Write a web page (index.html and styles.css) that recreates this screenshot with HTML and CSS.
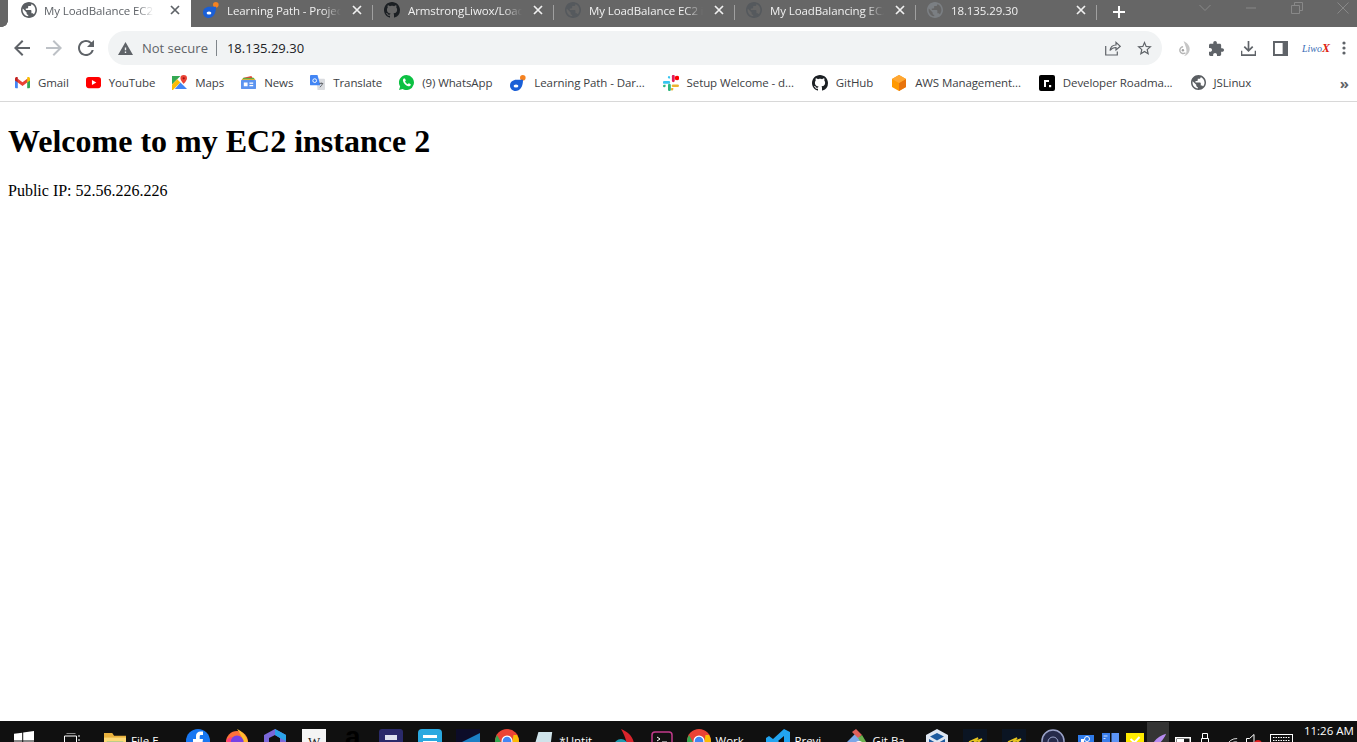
FILE: index.html
```html
<!DOCTYPE html>
<html lang="en">
<head>
<meta charset="utf-8">
<title>My LoadBalance EC2</title>
<link rel="stylesheet" href="styles.css">
</head>
<body>
<svg class="defs" width="0" height="0">
  <symbol id="globe" viewBox="2 2 20 20"><path d="M12 2C6.48 2 2 6.48 2 12s4.48 10 10 10 10-4.48 10-10S17.52 2 12 2zm-1 17.93c-3.95-.49-7-3.85-7-7.93 0-.62.08-1.21.21-1.79L9 15v1c0 1.1.9 2 2 2v1.93zm6.9-2.54c-.26-.81-1-1.39-1.9-1.39h-1v-3c0-.55-.45-1-1-1H8v-2h2c.55 0 1-.45 1-1V7h2c1.1 0 2-.9 2-2v-.41c2.93 1.19 5 4.06 5 7.41 0 2.08-.8 3.97-2.1 5.39z"/></symbol>
  <symbol id="github" viewBox="0 0 16 16"><path d="M8 0C3.58 0 0 3.58 0 8c0 3.54 2.29 6.53 5.47 7.59.4.07.55-.17.55-.38 0-.19-.01-.82-.01-1.49-2.01.37-2.53-.49-2.69-.94-.09-.23-.48-.94-.82-1.13-.28-.15-.68-.52-.01-.53.63-.01 1.08.58 1.23.82.72 1.21 1.87.87 2.33.66.07-.52.28-.87.51-1.07-1.78-.2-3.64-.89-3.64-3.95 0-.87.31-1.59.82-2.15-.08-.2-.36-1.02.08-2.12 0 0 .67-.21 2.2.82.64-.18 1.32-.27 2-.27s1.36.09 2 .27c1.53-1.04 2.2-.82 2.2-.82.44 1.1.16 1.92.08 2.12.51.56.82 1.27.82 2.15 0 3.07-1.87 3.75-3.65 3.95.29.25.54.73.54 1.48 0 1.07-.01 1.93-.01 2.2 0 .21.15.46.55.38A8.01 8.01 0 0 0 16 8c0-4.42-3.58-8-8-8z"/></symbol>
  <symbol id="close" viewBox="0 0 10 10"><path d="M1 1l8 8M9 1l-8 8" stroke="currentColor" stroke-width="1.7" fill="none"/></symbol>
  <symbol id="dar" viewBox="0 0 16 16"><circle cx="12.8" cy="2.800" r="2.800" fill="#f58220"/><path d="M13 4.800C13 12 10 16 5.500 16 2.400 16 0 13.600 0 10.500 0 7 3 4.800 6.500 4.800z" fill="#1a5fd6"/><ellipse cx="6" cy="11" rx="2.400" ry="1.500" fill="#fff"/></symbol>
</svg>

<header class="chrome">
  <div class="tabstrip">
    <div class="tab tab-active">
      <svg class="fav fav-dark"><use href="#globe"/></svg>
      <span class="tab-title">My LoadBalance EC2 instance</span>
      <svg class="tab-x"><use href="#close"/></svg>
    </div>
    <div class="tab">
      <svg class="fav"><use href="#dar"/></svg>
      <span class="tab-title">Learning Path - Projects</span>
      <svg class="tab-x"><use href="#close"/></svg>
    </div>
    <div class="tab">
      <svg class="fav fav-black"><use href="#github"/></svg>
      <span class="tab-title">ArmstrongLiwox/LoadBalancer</span>
      <svg class="tab-x"><use href="#close"/></svg>
    </div>
    <div class="tab">
      <svg class="fav fav-dim"><use href="#globe"/></svg>
      <span class="tab-title">My LoadBalance EC2 instance</span>
      <svg class="tab-x"><use href="#close"/></svg>
    </div>
    <div class="tab">
      <svg class="fav fav-dim"><use href="#globe"/></svg>
      <span class="tab-title">My LoadBalancing EC2 instance</span>
      <svg class="tab-x"><use href="#close"/></svg>
    </div>
    <div class="tab">
      <svg class="fav fav-dim2"><use href="#globe"/></svg>
      <span class="tab-title">18.135.29.30</span>
      <svg class="tab-x"><use href="#close"/></svg>
    </div>
    <svg class="newtab" viewBox="0 0 14 14"><path d="M7 1v12M1 7h12" stroke="#fff" stroke-width="2"/></svg>
    <div class="winctl">
      <svg viewBox="0 0 12 8"><path d="M.5 1L6 6.500 11.500 1" fill="none" stroke="#888"/></svg>
      <svg viewBox="0 0 12 8"><path d="M1 4h10" stroke="#888"/></svg>
      <svg viewBox="0 0 12 12"><path d="M.5 3.500h8v8h-8zM3.500 3.500v-3h8v8h-3" fill="none" stroke="#888"/></svg>
      <svg viewBox="0 0 12 12"><path d="M.5.5l11 11M11.500.5l-11 11" fill="none" stroke="#888"/></svg>
    </div>
  </div>

  <div class="toolbar">
    <svg class="nav" viewBox="0 0 24 24"><path fill="#5f6368" d="M20 11H7.830l5.590-5.590L12 4l-8 8 8 8 1.410-1.410L7.830 13H20v-2z"/></svg>
    <svg class="nav" viewBox="0 0 24 24"><path fill="#bdc1c6" d="M12 4l-1.410 1.410L16.170 11H4v2h12.170l-5.580 5.590L12 20l8-8z"/></svg>
    <svg class="nav" viewBox="0 0 24 24"><path fill="#5f6368" d="M17.650 6.350A7.958 7.958 0 0 0 12 4c-4.420 0-7.990 3.580-7.990 8s3.570 8 7.990 8c3.730 0 6.840-2.550 7.730-6h-2.080A5.990 5.990 0 0 1 12 18c-3.310 0-6-2.690-6-6s2.690-6 6-6c1.660 0 3.140.690 4.220 1.780L13 11h7V4l-2.350 2.350z"/></svg>
    <div class="omnibox">
      <svg class="warn" viewBox="1 2 22 19"><path fill="#5f6368" d="M1 21h22L12 2 1 21zm12-3h-2v-2h2v2zm0-4h-2v-4h2v4z"/></svg>
      <span class="secure">Not secure</span>
      <span class="url">18.135.29.30</span>
      <span class="spacer"></span>
      <svg class="omni-ic share" viewBox="0 0 16 16"><path d="M.7 6v9h11.600v-3.500M5 10.500c.5-3.500 3-5.500 6-5.500V2.300L15.300 6.300 11 10V7.500c-2.500 0-4.500 1-6 3z" fill="none" stroke="#5f6368" stroke-width="1.200"/></svg>
      <svg class="omni-ic star" viewBox="2 2 20 19"><path fill="#5f6368" d="M22 9.240l-7.190-.62L12 2 9.190 8.630 2 9.240l5.460 4.730L5.820 21 12 17.270 18.180 21l-1.630-7.030L22 9.240zM12 15.400l-3.760 2.270 1-4.280-3.320-2.880 4.380-.38L12 6.100l1.710 4.040 4.380.38-3.320 2.880 1 4.280L12 15.400z"/></svg>
    </div>
    <div class="ext-row">
      <svg class="ext" viewBox="0 0 16 16"><path d="M7 0c4.500 2.500 7 5.500 6.500 9.500C13 13 10.500 15.500 7.500 16c2-1.500 3-4 2.500-7C9.500 6 8 3 7 0z" fill="#c6c6c6"/><path d="M9 12.500A3.600 3.600 0 1 1 6.500 6.200" fill="none" stroke="#b4b4b4" stroke-width="1.500"/><circle cx="6.300" cy="9.800" r="1.300" fill="#a0a0a0"/></svg>
      <svg class="ext" viewBox="2 1 21 21"><path fill="#5f6368" d="M20.500 11H19V7c0-1.100-.9-2-2-2h-4V3.500C13 2.120 11.880 1 10.500 1S8 2.120 8 3.500V5H4c-1.100 0-1.990.9-1.990 2v3.800H3.500c1.490 0 2.700 1.210 2.700 2.700s-1.210 2.700-2.700 2.700H2V20c0 1.100.9 2 2 2h3.800v-1.500c0-1.490 1.210-2.700 2.700-2.700 1.490 0 2.700 1.210 2.700 2.700V22H17c1.100 0 2-.9 2-2v-4h1.500c1.380 0 2.500-1.120 2.500-2.500S21.880 11 20.500 11z"/></svg>
      <svg class="ext" viewBox="0 0 16 16"><path d="M8 0v10M3.500 6L8 10.500 12.500 6M.5 10.500V15h15v-4.500" fill="none" stroke="#5f6368" stroke-width="1.800"/></svg>
      <svg class="ext" viewBox="0 0 14 14"><path fill="#5f6368" fill-rule="evenodd" d="M0 0h14v14H0zM1.800 1.800v10.400H9V1.800z"/></svg>
      <span class="liwox">Liwo<b>X</b></span>
      <svg class="ext dots" viewBox="0 0 4 14"><circle cx="2" cy="2" r="1.600" fill="#5f6368"/><circle cx="2" cy="7" r="1.600" fill="#5f6368"/><circle cx="2" cy="12" r="1.600" fill="#5f6368"/></svg>
    </div>
  </div>

  <nav class="bookmarks">
    <a class="bm"><svg class="bi" viewBox="0 0 16 12"><path fill="#4285f4" d="M0 2h3v10H1a1 1 0 0 1-1-1z"/><path fill="#34a853" d="M13 2h3v9a1 1 0 0 1-1 1h-2z"/><path fill="#ea4335" d="M3 2v4l5 3.700L13 6V2L8 5.700z"/><path fill="#c5221f" d="M0 2c0-1.500 1.700-2.300 3-1.300V6L0 3.800z"/><path fill="#fbbc04" d="M13 .7C14.300-.3 16 .5 16 2v1.800L13 6z"/></svg>Gmail</a>
    <a class="bm"><svg class="bi" viewBox="0 0 16 12"><rect width="16" height="12" rx="3" fill="#f00"/><path d="M6.300 3.300L11 6l-4.700 2.700z" fill="#fff"/></svg>YouTube</a>
    <a class="bm"><svg class="bi" viewBox="0 0 16 16"><path fill="#34a853" d="M0 1h9L0 10z"/><path fill="#fbbc04" d="M0 10L5.500 4.500 9 8 1 16H0z"/><path fill="#4285f4" d="M9 8l7 7H3z"/><path fill="#ea4335" d="M12.500 0A3.500 3.500 0 0 0 9 3.500c0 2.500 3.500 6 3.500 6S16 6 16 3.500A3.500 3.500 0 0 0 12.500 0z"/><circle cx="12.500" cy="3.500" r="1.200" fill="#a50e0e"/></svg>Maps</a>
    <a class="bm"><svg class="bi" viewBox="0 0 16 14"><path fill="#ea4335" d="M3 2l8-2 2 3H3z"/><path fill="#34a853" d="M2 2h12v3H2z"/><path fill="#fbbc04" d="M1 3h14v2H1z"/><rect y="4" width="16" height="10" rx="1" fill="#5c94f0"/><rect x="3" y="7" width="4" height="4" fill="#fff"/><rect x="9" y="7" width="4" height="1.400" fill="#fff"/><rect x="9" y="9.600" width="4" height="1.400" fill="#fff"/></svg>News</a>
    <a class="bm"><svg class="bi" viewBox="0 0 16 16"><path fill="#dadce0" d="M7 4h8a1 1 0 0 1 1 1v10a1 1 0 0 1-1 1H8z"/><path fill="#4285f4" d="M1 0h7l3 11H1a1 1 0 0 1-1-1V1a1 1 0 0 1 1-1z"/><circle cx="5" cy="6" r="2" fill="none" stroke="#fff" stroke-width="1"/><path d="M10 9h4M12 8v1M10.500 13c1.500-1 2.500-2.500 3-4" stroke="#5f6368" fill="none"/></svg>Translate</a>
    <a class="bm bm-wide"><svg class="bi" viewBox="0 0 16 16"><path fill="#0cc143" d="M8 0a8 8 0 0 0-6.800 12.200L0 16l3.900-1.100A8 8 0 1 0 8 0z"/><path fill="#fff" d="M5.200 3.800c-.6.400-1.200 1.300-.9 2.700.5 2.300 3 4.900 5.400 5.400 1.300.3 2.300-.3 2.700-1 .2-.4.200-.9.100-1l-1.900-1c-.2-.1-.4 0-.5.100l-.7.800c-1-.3-2.600-1.800-3-2.900l.7-.7c.1-.2.200-.3.100-.5L6.500 3.900c-.2-.3-.9-.3-1.300-.1z"/></svg>(9) WhatsApp</a>
    <a class="bm bm-wide"><svg class="bi bi-16"><use href="#dar"/></svg>Learning Path - Dar...</a>
    <a class="bm bm-wide"><svg class="bi bi-16" viewBox="0 0 16 16"><path fill="#36c5f0" d="M1.200 6h4.600a1.200 1.200 0 0 1 0 2.800H1.200a1.200 1.200 0 0 1 0-2.800zM5.800 1a1.300 1.300 0 0 1 1.300 1.300v1.200H5.800a1.300 1.300 0 0 1 0-2.500z"/><path fill="#e01e5a" d="M8.900 1.200a1.400 1.400 0 0 1 2.800 0v4.600a1.400 1.400 0 0 1-2.800 0z"/><circle cx="14" cy="3" r="2.300" fill="#f00"/><path fill="#ecb22e" d="M10 9.500h4.700a1.300 1.300 0 0 1 0 2.600H10a1.300 1.300 0 0 1 0-2.600zM9 13h1.300v1.300A1.300 1.300 0 1 1 9 13z"/><path fill="#2eb67d" d="M5 10.200a1.400 1.400 0 0 1 2.800 0v4.500a1.400 1.400 0 0 1-2.800 0zM0 11a1.300 1.300 0 0 1 1.300-1.300h1.300V11a1.300 1.300 0 1 1-2.600 0z"/></svg>Setup Welcome - d...</a>
    <a class="bm bm-wide"><svg class="bi bi-16 bi-black"><use href="#github"/></svg>GitHub</a>
    <a class="bm bm-wide"><svg class="bi bi-16" viewBox="0 0 16 16"><path fill="#f90" d="M8 0l7 4v8l-7 4-7-4V4z"/><path fill="#e8730c" d="M8 8l7-4v8l-7 4z"/><path fill="#ffa733" d="M8 0l7 4-7 4-7-4z"/></svg>AWS Management...</a>
    <a class="bm bm-wide"><svg class="bi bi-16" viewBox="0 0 16 16"><rect width="16" height="16" rx="2" fill="#000"/><path d="M5 12V5h5v2H7v5z" fill="#fff"/><rect x="10" y="10" width="2.200" height="2.200" fill="#fff"/></svg>Developer Roadma...</a>
    <a class="bm"><svg class="bi bi-dark"><use href="#globe"/></svg>JSLinux</a>
    <span class="bm-more">»</span>
  </nav>
</header>

<main class="page">
  <h1>Welcome to my EC2 instance 2</h1>
  <p>Public IP: 52.56.226.226</p>
</main>

<footer class="taskbar">
  <span class="slot slot-start"><svg class="ti win" viewBox="0 0 20 20"><path fill="#fff" d="M0 2.800l8.200-1.100v7.900H0zM9.200 1.500L20 0v9.600H9.200zM0 10.500h8.200v7.900L0 17.200zM9.200 10.500H20V20L9.200 18.500z"/></svg></span>
  <span class="slot slot-start"><svg class="ti tv" viewBox="0 0 16 14"><path d="M2.500 0h9M.5 3h12v8H.5zM15 2v2M15 6v2M2.500 13.500h9" fill="none" stroke="#fff"/></svg></span>
  <span class="slot slot-file"><svg class="ti folder" viewBox="0 0 24 24"><path fill="#e8b13d" d="M0 0h9l2 3h13v21H0z"/><path fill="#fcd977" d="M0 5h24v19H0z"/><rect x="3" y="9" width="18" height="4" fill="#a9c98c"/></svg><span class="lbl">File E</span></span>
  <span class="slot"><svg class="ti" viewBox="0 0 24 24"><circle cx="12" cy="12" r="12" fill="#1877f2"/><path fill="#fff" d="M10 24V14H7v-4h3V7c0-3 2-4.500 4.500-4.500H17V6h-2c-1 0-1.300.6-1.300 1.500V10H17l-.6 4h-2.700v10z"/></svg></span>
  <span class="slot"><svg class="ti" viewBox="0 0 24 24"><circle cx="12" cy="13" r="11" fill="#ff7139"/><path fill="#ffbd2e" d="M12 0c6 3 11 8 11 15 0 3-2 6-4 7 2-6-1-13-7-22z"/><circle cx="12" cy="13" r="6.500" fill="#7542e5"/><path fill="#ff3f7f" d="M1 12c2-3 4-4 6-4l-2 6z"/></svg></span>
  <span class="slot"><svg class="ti" viewBox="0 0 24 24"><path fill="#7b68d9" d="M12 0L23 6v12l-6 3V9l-5-3-6 3v12l-5-3V6z"/><path fill="#2ba3e8" d="M12 0l11 6v6l-6-3-5-3z"/><path fill="#9adf7c" d="M6 21l6 3 5-3-5-3z"/></svg></span>
  <span class="slot"><span class="wiki">W</span></span>
  <span class="slot"><span class="amz">a</span></span>
  <span class="slot"><svg class="ti" viewBox="0 0 24 24"><rect width="24" height="24" rx="3" fill="#2a2a6a"/><rect x="6" y="6" width="12" height="5" fill="#dfe3ee"/><rect x="6" y="13" width="8" height="5" fill="#dfe3ee"/></svg></span>
  <span class="slot"><svg class="ti" viewBox="0 0 24 24"><rect width="24" height="24" rx="4" fill="#2aa9e0"/><rect x="5" y="6" width="14" height="3" fill="#fff"/><rect x="5" y="12" width="14" height="3" fill="#fff"/></svg></span>
  <span class="slot"><svg class="ti" viewBox="0 0 24 24"><rect width="24" height="24" fill="#0c0c28"/><path fill="#1b7fc4" d="M0 16L24 4v20H0z"/></svg></span>
  <span class="slot"><svg class="ti" viewBox="0 0 24 24"><circle cx="12" cy="12" r="12" fill="#ea4335"/><path fill="#fbbc04" d="M24 12A12 12 0 0 1 12 24l5-9 1.500-9H22a12 12 0 0 1 2 6z"/><path fill="#34a853" d="M0 12a12 12 0 0 0 12 12l5-9-10 0-5-9a12 12 0 0 0-2 6z"/><circle cx="12" cy="12" r="5.500" fill="#fff"/><circle cx="12" cy="12" r="4.300" fill="#4285f4"/></svg></span>
  <span class="slot slot-note"><svg class="ti note" viewBox="0 0 24 24"><path fill="#cfe3ea" d="M7 0h15l-3 24H0z"/><path fill="#8fb3bd" d="M4 14h15l-1 10H0z"/></svg><span class="lbl">*Untit</span></span>
  <span class="slot"><svg class="ti" viewBox="0 0 24 24"><path fill="#d8242c" d="M9 0c7 3 13 8 13 16 0 3-1 6-3 8h-6C17 16 13 7 9 0z"/><circle cx="9" cy="17" r="7" fill="#1d9bb0"/></svg></span>
  <span class="slot"><svg class="ti term" viewBox="0 0 22 24"><rect x="1" y="1" width="20" height="24" rx="3" fill="#111" stroke="#c23a8b" stroke-width="1.500"/><path d="M6 6l3 2-3 2M11 11h5" stroke="#fff" fill="none"/></svg></span>
  <span class="slot slot-work"><svg class="ti" viewBox="0 0 24 24"><circle cx="12" cy="12" r="12" fill="#ea4335"/><path fill="#fbbc04" d="M24 12A12 12 0 0 1 12 24l5-9 1.500-9H22a12 12 0 0 1 2 6z"/><path fill="#34a853" d="M0 12a12 12 0 0 0 12 12l5-9-10 0-5-9a12 12 0 0 0-2 6z"/><circle cx="12" cy="12" r="5.500" fill="#fff"/><circle cx="12" cy="12" r="4.300" fill="#4285f4"/></svg><span class="lbl">Work</span></span>
  <span class="slot slot-code"><svg class="ti" viewBox="0 0 24 24"><path fill="#22a5f1" d="M18 0l6 3v18l-6 3L7 14l-4 3-3-2V9l3-2 4 3zM18 7l-6 5 6 5z"/></svg><span class="lbl">Previ</span></span>
  <span class="slot slot-git"><svg class="ti" viewBox="0 0 24 24"><path fill="#7aa7e8" d="M12 4L24 16l-8 8H8l-8-8z"/><path fill="#e0605a" d="M8 3l4-3 6 6-4 3z"/><path fill="#6cb14f" d="M14 9l4-3 6 10-4 3z"/><circle cx="15" cy="16" r="4" fill="#fff"/></svg><span class="lbl">Git Ba</span></span>
  <span class="slot"><svg class="ti vb" viewBox="0 0 22 24"><path fill="#dfe7f2" d="M11 0l11 6v14l-11 6L0 20V6z"/><path fill="#1d5a9e" d="M11 4l7 3.500-7 4-7-4zM3 10l7 4v7l-7-4zM19 10l-7 4v7l7-4z"/></svg></span>
  <span class="slot"><svg class="ti" viewBox="0 0 24 24"><rect width="24" height="24" fill="#0b1523"/><path d="M6 13l9-4-4 4 8-3-7 6" fill="none" stroke="#e6c51f" stroke-width="1.500"/></svg></span>
  <span class="slot"><svg class="ti" viewBox="0 0 24 24"><rect width="24" height="24" fill="#0b1523"/><path d="M6 13l9-4-4 4 8-3-7 6" fill="none" stroke="#e6c51f" stroke-width="1.500"/></svg></span>
  <span class="slot"><svg class="ti" viewBox="0 0 24 24"><circle cx="12" cy="12" r="11" fill="#252a4a" stroke="#9ba3c9" stroke-width="1.500"/><circle cx="12" cy="13" r="5" fill="none" stroke="#9ba3c9"/></svg></span>
  <div class="tray">
    <svg class="tr tr-cam" viewBox="0 0 16 16"><rect width="16" height="16" fill="#2f7bea"/><circle cx="9" cy="4" r="2.500" fill="none" stroke="#fff"/><rect x="3" y="4" width="3" height="3" fill="#fff"/></svg>
    <svg class="tr tr-sq" viewBox="0 0 17 10"><rect width="8" height="10" fill="#3a7eea"/><rect x="9.500" width="7.500" height="10" fill="#5c94f5"/><path d="M1.500 3h4M1.500 5.500h2" stroke="#cfe0ff"/></svg>
    <svg class="tr tr-y" viewBox="0 0 18 18"><rect width="18" height="18" fill="#ffea00"/><path d="M4.500 6l4 3.500 5-5.500" fill="none" stroke="#fff" stroke-width="2"/></svg>
    <span class="tr-active"><svg viewBox="0 0 22 20"><path fill="#b78bf0" d="M20 2C12 4 5 10 2 20 8 16 16 12 20 2z"/></svg></span>
    <svg class="tr tr-bat" viewBox="0 0 16 16"><rect x=".75" y=".75" width="14.500" height="14" fill="none" stroke="#fff" stroke-width="1.500"/><rect x="2" y="2" width="7" height="11" fill="#fff"/></svg>
    <svg class="tr tr-usb" viewBox="0 0 8 16"><path d="M1.500.5h5v5h-5zM.5 5.500h7V16h-7z" fill="none" stroke="#fff"/></svg>
    <svg class="tr tr-wifi" viewBox="0 0 14 10"><path d="M1 9a12 12 0 0 1 12-8M4 10a8 8 0 0 1 9-5" fill="none" stroke="#fff"/></svg>
    <span class="vol"><svg class="tr tr-vol" viewBox="0 0 10 14"><path d="M.5 4.500h3L8 .5v13l-4.500-4h-3z" fill="none" stroke="#fff"/></svg><i class="vol-dot"></i></span>
    <svg class="tr tr-kb" viewBox="0 0 23 14"><rect x=".5" y=".5" width="22" height="13" fill="none" stroke="#fff"/><path d="M3 3.500h17M3 6.500h17" stroke="#fff" stroke-dasharray="1.500 1"/></svg>
    <span class="clock">11:26 AM</span>
  </div>
</footer>
</body>
</html>
```

FILE: styles.css
```css
* { box-sizing: border-box; }
html, body { height: 100%; margin: 0; overflow: hidden; }
body {
  display: flex;
  flex-direction: column;
  height: 742px;
  background: #fff;
  color: #000;
  font-family: "Liberation Serif", serif;
}
.defs { position: absolute; }
.chrome { font-family: "Open Sans", "Noto Sans", sans-serif; flex: none; }

.tabstrip {
  height: 27px;
  background: #666;
  display: flex;
  align-items: center;
  padding-left: 8px;
}
.tab {
  position: relative;
  width: 181px;
  height: 27px;
  display: flex;
  align-items: center;
  padding: 0 9px 7px 13px;
  gap: 8px;
  color: #f0f0f0;
  font-size: 11.500px;
  letter-spacing: -.1px;
  flex: none;
}
.tab::after {
  content: "";
  position: absolute;
  right: -2px;
  top: 5px;
  width: 1px;
  height: 15px;
  background: #a0a0a0;
}
.tab-active {
  width: 183px;
  margin-right: -1px;
  padding-right: 11px;
  gap: 7px;
  background: #fff;
  color: #5f6368;
}
.tab-active::before {
  content: "";
  position: absolute;
  left: -6px;
  bottom: 0;
  width: 6px;
  height: 6px;
  background: radial-gradient(circle at 0 0, transparent 5.500px, #fff 6px);
}
.tab-active::after { display: none; }
.fav { width: 16px; height: 16px; flex: none; }
.fav-dark { fill: #5a5e62; }
.fav-black { fill: #1b1f23; }
.fav-dim { fill: #55595d; }
.fav-dim2 { fill: #7b7f83; }
.tab-title {
  flex: 1;
  min-width: 0;
  margin-right: 3px;
  white-space: nowrap;
  overflow: hidden;
  -webkit-mask-image: linear-gradient(to right, #000 84%, transparent 100%);
  mask-image: linear-gradient(to right, #000 84%, transparent 100%);
}
.tab-active .tab-title { margin-right: 9px; }
.tab-x { width: 10px; height: 10px; flex: none; color: #f0f0f0; }
.tab-active .tab-x { color: #5f6368; }
.newtab { width: 14px; height: 14px; margin-left: 17px; margin-bottom: 3px; flex: none; }
.winctl {
  margin-left: auto;
  display: flex;
  align-items: flex-start;
  align-self: flex-start;
  padding-top: 2px;
}
.winctl svg { width: 12px; height: 12px; margin: 0 17px; }
.winctl svg:first-child { margin-left: 0; }
.winctl svg:last-child { margin-right: 8px; }

.toolbar {
  height: 38px;
  background: #fff;
  display: flex;
  align-items: flex-end;
  padding-left: 10px;
}
.nav { width: 24px; height: 24px; margin: 0 4px 5px; flex: none; }
.toolbar .nav:first-child { margin-left: 0; }
.omnibox {
  width: 1054px;
  height: 34px;
  margin-left: 6px;
  border-radius: 17px;
  background: #f1f3f4;
  display: flex;
  align-items: center;
  padding: 0 10px;
  font-size: 13px;
  flex: none;
}
.warn { width: 15px; height: 13px; flex: none; }
.secure {
  margin-left: 9px;
  padding-right: 8px;
  color: #5f6368;
  border-right: 1px solid #80868b;
  line-height: 16px;
}
.url { margin-left: 10px; color: #202124; }
.spacer { flex: 1; }
.omni-ic { flex: none; }
.share { width: 16px; height: 16px; margin-right: 16px; }
.star { width: 15px; height: 14px; }
.ext-row {
  flex: 1;
  height: 34px;
  display: flex;
  align-items: center;
  padding-left: 15px;
}
.ext { width: 15px; height: 15px; margin-right: 17px; flex: none; }
.liwox {
  width: 24px;
  margin-left: -3px;
  margin-right: 16px;
  font: italic 10px "Liberation Serif", serif;
  color: #3a6db5;
  flex: none;
}
.liwox b { color: #d21; font-size: 12px; }
.dots { width: 4px; height: 14px; margin: 0; }

.bookmarks {
  height: 37px;
  padding: 0 0 1px 15px;
  background: #fff;
  border-bottom: 1px solid #d8d8d8;
  display: flex;
  align-items: center;
  font-size: 11.500px;
  letter-spacing: -.1px;
  color: #3c4043;
  white-space: nowrap;
}
.bm { display: flex; align-items: center; gap: 8px; margin-right: 17px; flex: none; }
.bm-wide { margin-right: 18px; }
.bi { width: 15px; height: 15px; flex: none; }
.bi-16 { width: 16px; height: 16px; }
.bi-black { fill: #1b1f23; }
.bi-dark { fill: #5a5e62; }
.bm-more { margin-left: auto; margin-right: 8px; color: #5f6368; font-size: 15px; font-weight: 700; line-height: 16px; }

.page { flex: 1; min-height: 0; padding: 0 8px; }

.taskbar {
  height: 21px;
  flex: none;
  background: #101010;
  display: flex;
  align-items: flex-start;
  overflow: hidden;
  color: #fff;
  font: 11.500px "Open Sans", sans-serif;
}
.slot {
  width: 38.600px;
  height: 40px;
  padding-top: 8px;
  display: flex;
  justify-content: center;
  flex: none;
}
.ti { width: 24px; height: 24px; flex: none; }
.slot-start { width: 48px; }
.win { width: 20px; height: 20px; margin-top: 2px; }
.tv { width: 16px; height: 14px; margin-top: 4px; }
.folder { width: 22px; margin-top: 3px; margin-left: 1px; }
.note { width: 22px; margin-top: 2px; }
.slot-file, .slot-note, .slot-work, .slot-code, .slot-git {
  justify-content: flex-start;
  padding-left: 6px;
}
.slot-file { width: 82px; margin-left: 1px; }
.slot-note { width: 78px; }
.slot-work { width: 76px; padding-left: 5px; }
.slot-code { width: 79px; margin-left: 2px; }
.slot-git { width: 79px; padding-left: 5px; }
.lbl { margin-left: 5px; line-height: 22px; padding-top: 1px; }
.wiki {
  width: 24px;
  height: 24px;
  background: #f4f4f4;
  color: #222;
  font: 13px "Liberation Serif", serif;
  text-align: center;
  padding-top: 5px;
}
.amz {
  width: 24px;
  color: #000;
  font: bold 28px/16px "Liberation Sans", sans-serif;
  text-align: center;
}
.term { width: 22px; margin-top: 2px; }
.vb { width: 22px; }
.tray {
  display: flex;
  align-items: flex-start;
  flex: 1;
  padding-left: 6px;
  min-width: 0;
}
.tr { flex: none; }
.tr-cam { width: 16px; height: 16px; margin-top: 14px; }
.tr-sq { width: 17px; height: 10px; margin: 12px 0 0 8px; }
.tr-y { width: 18px; height: 18px; margin: 12px 0 0 7px; }
.tr-active {
  width: 22px;
  height: 21px;
  margin: 1px 0 0 3px;
  background: #343434;
  padding: 10px 1px 0;
  flex: none;
  overflow: hidden;
}
.tr-active svg { display: block; width: 20px; height: 18px; }
.tr-bat { width: 16px; height: 16px; margin: 16px 0 0 6px; }
.tr-usb { width: 8px; height: 16px; margin: 12px 0 0 10px; }
.tr-wifi { width: 12px; height: 10px; margin: 16px 0 0 17px; }
.vol { position: relative; width: 13px; height: 16px; margin: 13px 0 0 8px; flex: none; }
.tr-vol { width: 10px; height: 14px; display: block; }
.vol-dot {
  position: absolute;
  left: 8px;
  top: 6px;
  width: 8px;
  height: 8px;
  border-radius: 50%;
  background: #e02020;
}
.tr-kb { width: 23px; height: 14px; margin: 13px 0 0 11px; }
.clock {
  margin-left: 11px;
  line-height: 20px;
  white-space: nowrap;
}
```
